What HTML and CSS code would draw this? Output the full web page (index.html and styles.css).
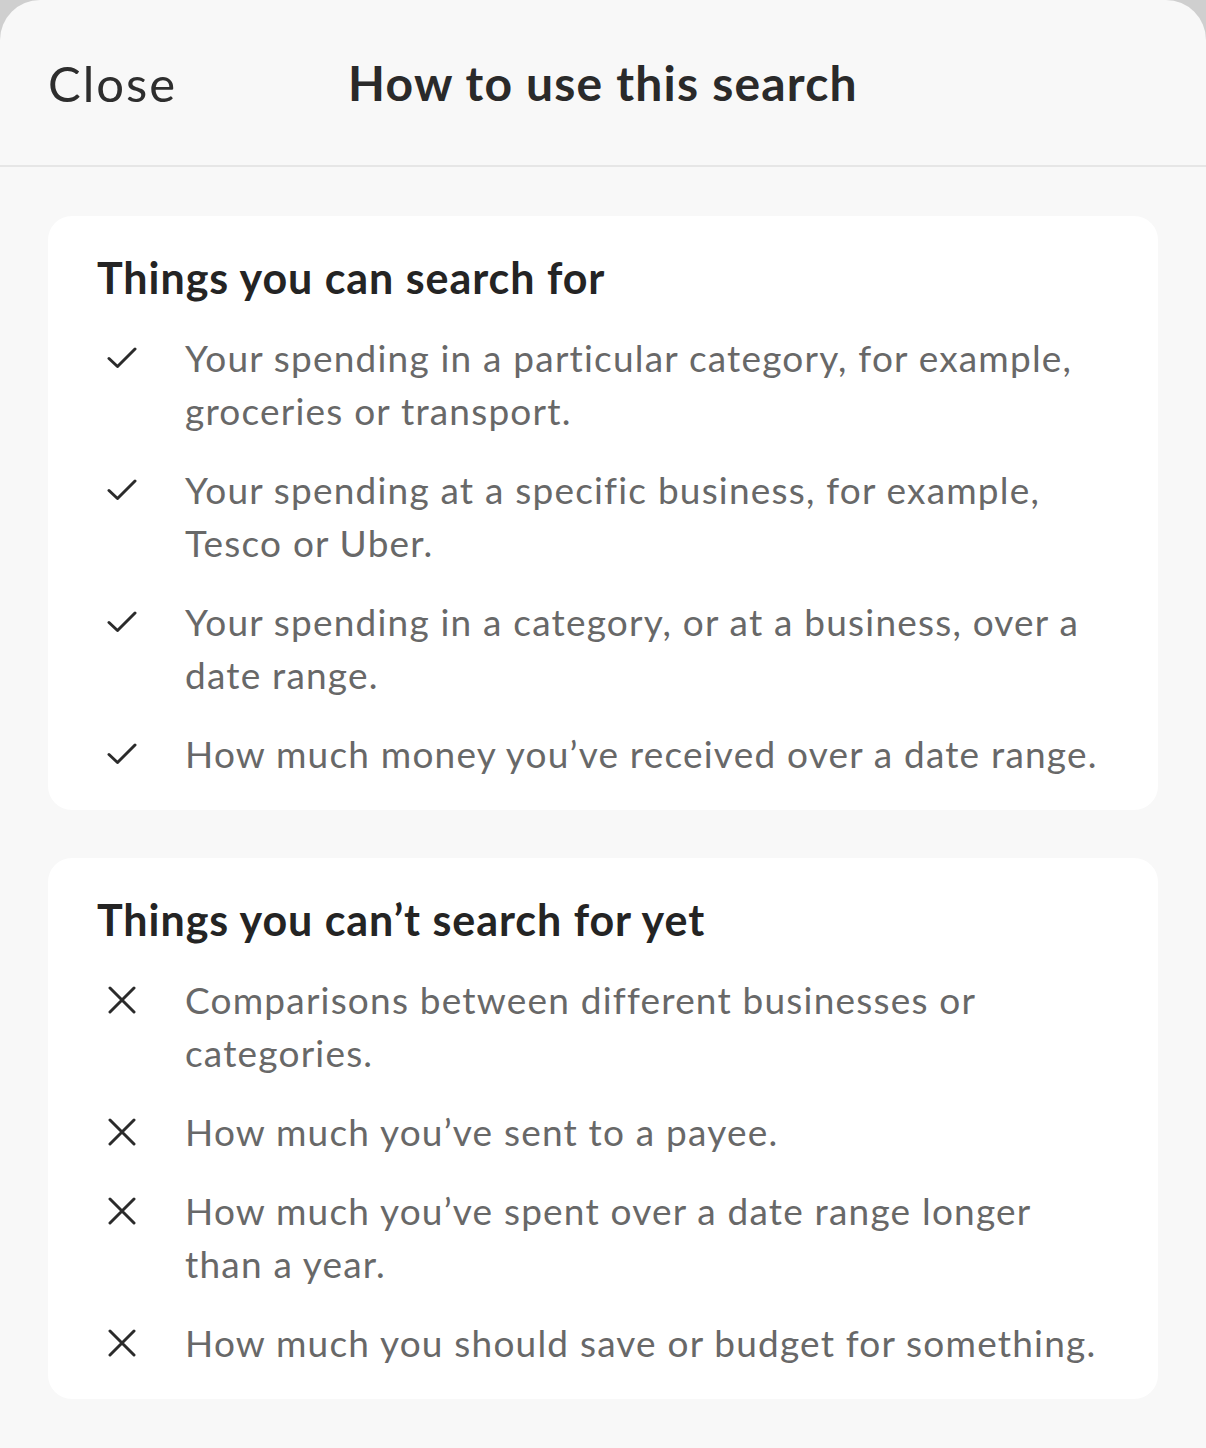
FILE: index.html
```html
<!DOCTYPE html>
<html lang="en">
<head>
<meta charset="utf-8">
<title>How to use this search</title>
<link rel="stylesheet" href="styles.css">
</head>
<body>
<div class="sheet">
  <header class="header">
    <button class="close">Close</button>
    <h1 class="title">How to use this search</h1>
    <span class="spacer"></span>
  </header>
  <main class="content">
    <section class="card">
      <h2 class="card-title">Things you can search for</h2>
      <ul class="list">
        <li class="item">
          <span class="icon"><svg width="30" height="22" viewBox="0 0 30 22"><path d="M2 11.5 L10.5 19.5 L28 2" fill="none" stroke="#2b2b2b" stroke-width="3" stroke-linecap="round" stroke-linejoin="round"/></svg></span>
          <span class="text">Your spending in a particular category, for example, groceries or transport.</span>
        </li>
        <li class="item">
          <span class="icon"><svg width="30" height="22" viewBox="0 0 30 22"><path d="M2 11.5 L10.5 19.5 L28 2" fill="none" stroke="#2b2b2b" stroke-width="3" stroke-linecap="round" stroke-linejoin="round"/></svg></span>
          <span class="text">Your spending at a specific business, for example, Tesco or Uber.</span>
        </li>
        <li class="item">
          <span class="icon"><svg width="30" height="22" viewBox="0 0 30 22"><path d="M2 11.5 L10.5 19.5 L28 2" fill="none" stroke="#2b2b2b" stroke-width="3" stroke-linecap="round" stroke-linejoin="round"/></svg></span>
          <span class="text">Your spending in a category, or at a business, over a date range.</span>
        </li>
        <li class="item">
          <span class="icon"><svg width="30" height="22" viewBox="0 0 30 22"><path d="M2 11.5 L10.5 19.5 L28 2" fill="none" stroke="#2b2b2b" stroke-width="3" stroke-linecap="round" stroke-linejoin="round"/></svg></span>
          <span class="text">How much money you’ve received over a date range.</span>
        </li>
      </ul>
    </section>
    <section class="card">
      <h2 class="card-title">Things you can’t search for yet</h2>
      <ul class="list">
        <li class="item">
          <span class="icon"><svg width="28" height="28" viewBox="0 0 28 28"><path d="M2 2 L26 26 M26 2 L2 26" fill="none" stroke="#2b2b2b" stroke-width="3" stroke-linecap="round"/></svg></span>
          <span class="text">Comparisons between different businesses or categories.</span>
        </li>
        <li class="item">
          <span class="icon"><svg width="28" height="28" viewBox="0 0 28 28"><path d="M2 2 L26 26 M26 2 L2 26" fill="none" stroke="#2b2b2b" stroke-width="3" stroke-linecap="round"/></svg></span>
          <span class="text">How much you’ve sent to a payee.</span>
        </li>
        <li class="item">
          <span class="icon"><svg width="28" height="28" viewBox="0 0 28 28"><path d="M2 2 L26 26 M26 2 L2 26" fill="none" stroke="#2b2b2b" stroke-width="3" stroke-linecap="round"/></svg></span>
          <span class="text">How much you’ve spent over a date range longer than a year.</span>
        </li>
        <li class="item">
          <span class="icon"><svg width="28" height="28" viewBox="0 0 28 28"><path d="M2 2 L26 26 M26 2 L2 26" fill="none" stroke="#2b2b2b" stroke-width="3" stroke-linecap="round"/></svg></span>
          <span class="text">How much you should save or budget for something.</span>
        </li>
      </ul>
    </section>
  </main>
</div>
</body>
</html>
```

FILE: styles.css
```css
* { box-sizing: border-box; }
html, body { margin: 0; padding: 0; }
body {
  background: #cfcfcf;
  font-family: "Lato", "Noto Sans", sans-serif;
}
.sheet {
  background: #f8f8f8;
  border-radius: 40px 40px 0 0;
  min-height: 1448px;
}
.header {
  height: 167px;
  border-bottom: 2px solid #e6e6e6;
  display: grid;
  grid-template-columns: 1fr auto 1fr;
  align-items: center;
  padding: 0 48px;
}
.close {
  justify-self: start;
  background: none;
  border: 0;
  padding: 0;
  font-family: inherit;
  font-size: 49px;
  font-weight: 400;
  letter-spacing: 2px;
  color: #2e2e2e;
}
.title {
  margin: 0;
  font-size: 48px;
  font-weight: 700;
  letter-spacing: 1.2px;
  color: #2a2a2a;
}
.content {
  padding: 49px 48px 0;
  display: flex;
  flex-direction: column;
  gap: 48px;
}
.card {
  background: #ffffff;
  border-radius: 24px;
  padding: 36px 48px 30px 49px;
}
.card-title {
  margin: 0;
  font-size: 43px;
  line-height: 52px;
  font-weight: 700;
  letter-spacing: 0.95px;
  color: #242424;
}
.list {
  list-style: none;
  margin: 27px 0 0;
  padding: 0;
  display: flex;
  flex-direction: column;
  gap: 26px;
}
.item {
  display: grid;
  grid-template-columns: 88px 1fr;
  font-size: 37px;
  line-height: 53px;
  letter-spacing: 1.2px;
  color: #686868;
}
.icon {
  width: 50px;
  height: 53px;
  display: flex;
  align-items: center;
  justify-content: center;
}
```
